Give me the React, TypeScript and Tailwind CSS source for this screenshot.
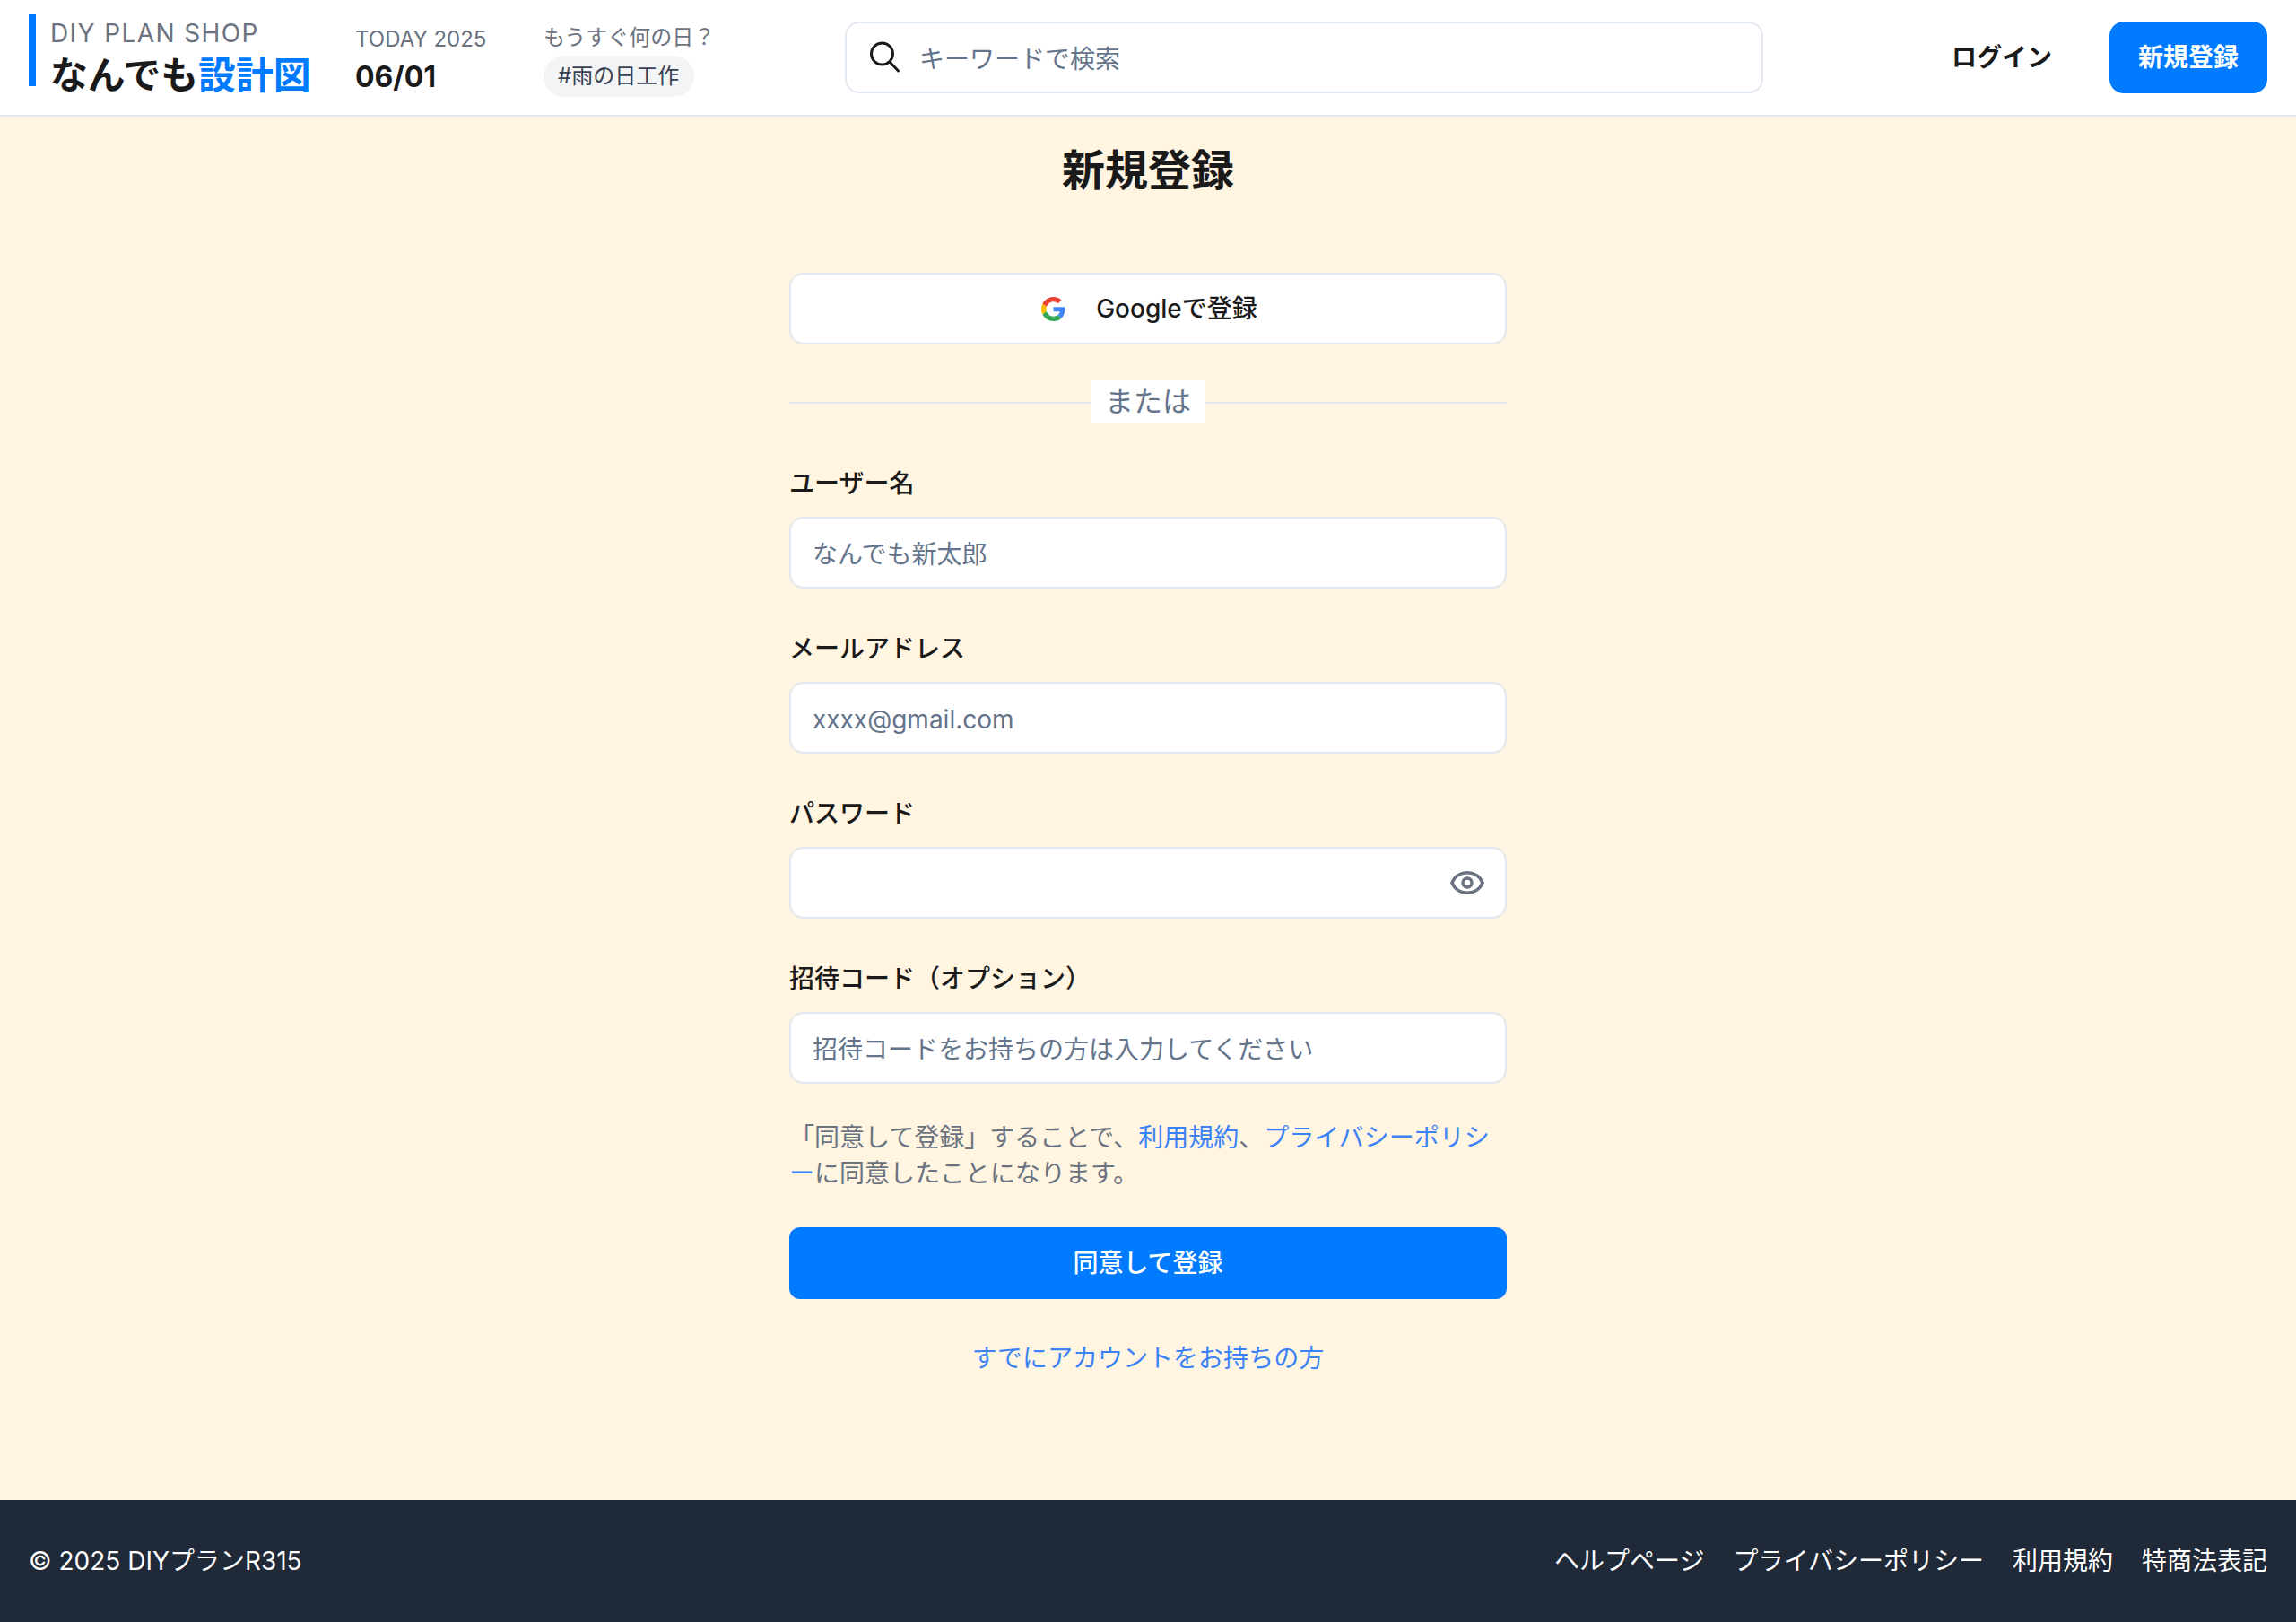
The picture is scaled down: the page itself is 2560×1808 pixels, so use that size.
import React from 'react';

const fieldClass =
  'h-[80px] w-full rounded-[16px] border-2 border-[#e2e8f0] bg-white px-[24px] pt-[3px] text-[28px] text-[#1a1a1a] placeholder:text-[#64748b] outline-none';

const GoogleIcon = () => (
  <svg className="ml-[3px]" width="27" height="27" viewBox="0 0 48 48">
    <path fill="#EA4335" d="M24 9.5c3.54 0 6.71 1.22 9.21 3.6l6.85-6.85C35.9 2.38 30.47 0 24 0 14.62 0 6.51 5.38 2.56 13.22l7.98 6.19C12.43 13.72 17.74 9.5 24 9.5z" />
    <path fill="#4285F4" d="M46.98 24.55c0-1.57-.15-3.09-.38-4.55H24v9.02h12.94c-.58 2.96-2.26 5.48-4.78 7.18l7.73 6c4.51-4.18 7.09-10.36 7.09-17.65z" />
    <path fill="#FBBC05" d="M10.53 28.59c-.48-1.45-.76-2.99-.76-4.59s.27-3.14.76-4.59l-7.98-6.19C.92 16.46 0 20.12 0 24c0 3.88.92 7.54 2.56 10.78l7.97-6.19z" />
    <path fill="#34A853" d="M24 48c6.48 0 11.93-2.13 15.89-5.81l-7.73-6c-2.15 1.45-4.92 2.3-8.16 2.3-6.26 0-11.57-4.22-13.47-9.91l-7.98 6.19C6.51 42.62 14.62 48 24 48z" />
  </svg>
);

const SearchIcon = () => (
  <svg className="absolute top-[22px] left-[26px]" width="36" height="36" viewBox="0 0 36 36" fill="none" stroke="#1a1a1a" strokeWidth="3" strokeLinecap="round">
    <circle cx="15.5" cy="14" r="12" />
    <path d="M24 23l9.5 10" />
  </svg>
);

const EyeIcon = () => (
  <svg className="absolute top-[27px] right-[25px]" width="38" height="26" viewBox="0 0 38 26" fill="none" stroke="#6b7280" strokeWidth="3.5">
    <path d="M2 13C8 -2 30 -2 36 13C30 28 8 28 2 13Z" strokeLinejoin="round" />
    <circle cx="19" cy="13" r="5" />
  </svg>
);

const Field = ({ label, placeholder, children }: { label: string; placeholder?: string; children?: React.ReactNode }) => (
  <div>
    <label className="mb-[15px] block text-[28px] leading-[44px] font-medium text-[#1a1a1a]">{label}</label>
    <div className="relative">
      <input type="text" placeholder={placeholder} className={fieldClass} />
      {children}
    </div>
  </div>
);

export default function App() {
  return (
    <div
      className="flex min-h-[1808px] flex-col bg-[#fff5e1] text-[#1a1a1a]"
      style={{ fontFamily: 'Inter, "Noto Sans CJK JP", sans-serif' }}
    >
      {/* Header */}
      <header className="flex h-[130px] items-center border-b-2 border-[#e2e8f0] bg-white px-[32px]">
        <div className="-mt-[16px] h-[80px] w-[364px] border-l-[8px] border-[#007bff] pl-[16px]">
          <div className="pt-[1px] text-[28px] leading-[40px] tracking-[1.4px] text-[#6b7280]">DIY PLAN SHOP</div>
          <div className="pt-[1px] text-[41.8px] leading-[52px] font-bold whitespace-nowrap">
            なんでも<span className="text-[#007bff]">設計図</span>
          </div>
        </div>
        <div className="mt-[8px] w-[210px]">
          <div className="text-[24px] leading-[32px] text-[#6b7280]">TODAY 2025</div>
          <div className="mt-[4px] text-[32px] leading-[44px] font-bold">06/01</div>
        </div>
        <div className="mt-[6px] w-[336px]">
          <div className="text-[24px] leading-[32px] text-[#6b7280]">もうすぐ何の日？</div>
          <span className="mt-[4px] inline-block h-[46px] rounded-full bg-[#f3f4f6] pr-[17px] pl-[16px] text-[24px] leading-[46px] text-[#374151]">
            #雨の日工作
          </span>
        </div>
        <div className="relative h-[80px] w-[1024px]">
          <SearchIcon />
          <input
            type="text"
            placeholder="キーワードで検索"
            className="h-full w-full rounded-[16px] border-2 border-[#e2e8f0] bg-white pt-[3px] pr-[24px] pl-[81px] text-[28px] placeholder:text-[#64748b] outline-none"
          />
        </div>
        <div className="ml-auto flex items-center gap-[32px]">
          <button className="h-[80px] px-[32px] text-[28px] font-bold text-[#1a1a1a]">ログイン</button>
          <button className="h-[80px] rounded-[16px] bg-[#007bff] px-[32px] text-[28px] font-bold text-white">新規登録</button>
        </div>
      </header>

      {/* Form */}
      <main className="flex flex-1 flex-col items-center">
        <h1 className="mt-[30px] mb-[84px] text-[48px] leading-[60px] font-bold">新規登録</h1>
        <div className="w-[800px]">
          <button className="flex h-[80px] w-full items-center justify-center gap-[34px] rounded-[16px] border-2 border-[#e2e8f0] bg-white text-[28px] font-medium">
            <GoogleIcon />
            Googleで登録
          </button>

          <div className="mt-[40px] mb-[45px] flex items-center">
            <div className="mt-[2px] h-[2px] flex-1 bg-[#e2e8f0]" />
            <span className="bg-white px-[16px] text-[32px] leading-[48px] text-[#64748b]">または</span>
            <div className="mt-[2px] h-[2px] flex-1 bg-[#e2e8f0]" />
          </div>

          <div className="flex flex-col gap-[45px]">
            <Field label="ユーザー名" placeholder="なんでも新太郎" />
            <Field label="メールアドレス" placeholder="xxxx@gmail.com" />
            <Field label="パスワード">
              <EyeIcon />
            </Field>
            <Field label="招待コード（オプション）" placeholder="招待コードをお持ちの方は入力してください" />
          </div>

          <p className="mt-[40px] text-[28px] leading-[40px] text-[#6b7280]">
            「同意して登録」することで、<a className="text-[#3b82f6]">利用規約</a>、<a className="text-[#3b82f6]">プライバシーポリシー</a>に同意したことになります。
          </p>

          <button className="mt-[40px] h-[80px] w-full rounded-[12px] bg-[#007bff] text-[28px] font-medium text-white">同意して登録</button>

          <div className="mt-[46px] text-center text-[28px] leading-[40px] text-[#3b82f6]">すでにアカウントをお持ちの方</div>
        </div>
      </main>

      {/* Footer */}
      <footer className="flex h-[136px] items-center justify-between bg-[#1f2937] px-[32px] text-[28px] text-white">
        <div>© 2025 DIYプランR315</div>
        <nav className="flex gap-[32px]">
          <a>ヘルプページ</a>
          <a>プライバシーポリシー</a>
          <a>利用規約</a>
          <a>特商法表記</a>
        </nav>
      </footer>
    </div>
  );
}
